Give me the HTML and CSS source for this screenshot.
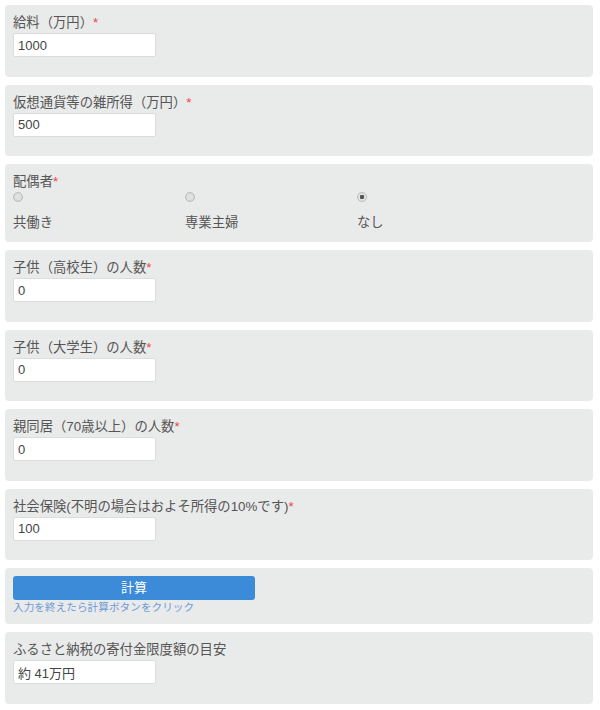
FILE: index.html
```html
<!DOCTYPE html>
<html lang="ja">
<head>
<meta charset="utf-8">
<title>ふるさと納税 計算</title>
<link rel="stylesheet" href="styles.css">
</head>
<body>
<form class="form">
  <div class="card">
    <div class="label">給料（万円）<span class="req">*</span></div>
    <input class="field" type="text" value="1000">
  </div>
  <div class="card">
    <div class="label">仮想通貨等の雑所得（万円）<span class="req">*</span></div>
    <input class="field" type="text" value="500">
  </div>
  <div class="card card-radio">
    <div class="label">配偶者<span class="req">*</span></div>
    <div class="radios">
      <label class="opt"><input class="radio" type="radio" name="sp"><span class="opt-text">共働き</span></label>
      <label class="opt"><input class="radio" type="radio" name="sp"><span class="opt-text">専業主婦</span></label>
      <label class="opt"><input class="radio" type="radio" name="sp" checked><span class="opt-text">なし</span></label>
    </div>
  </div>
  <div class="card">
    <div class="label">子供（高校生）の人数<span class="req">*</span></div>
    <input class="field" type="text" value="0">
  </div>
  <div class="card">
    <div class="label">子供（大学生）の人数<span class="req">*</span></div>
    <input class="field" type="text" value="0">
  </div>
  <div class="card">
    <div class="label">親同居（70歳以上）の人数<span class="req">*</span></div>
    <input class="field" type="text" value="0">
  </div>
  <div class="card">
    <div class="label">社会保険(不明の場合はおよそ所得の10%です)<span class="req">*</span></div>
    <input class="field" type="text" value="100">
  </div>
  <div class="card card-btn">
    <button class="btn" type="button">計算</button>
    <div class="hint">入力を終えたら計算ボタンをクリック</div>
  </div>
  <div class="card">
    <div class="label">ふるさと納税の寄付金限度額の目安</div>
    <input class="field" type="text" value="約 41万円">
  </div>
</form>
</body>
</html>
```
FILE: styles.css
```css
html, body {
  margin: 0;
  padding: 0;
  background: #ffffff;
}
body {
  font-family: "Liberation Sans", "Noto Sans CJK JP", sans-serif;
  color: #555555;
}
.form {
  width: 588px;
  margin: 5px 0 0 5px;
  display: flex;
  flex-direction: column;
  gap: 8px;
}
.card {
  background: #e9eaea;
  border-radius: 4px;
  padding: 8px 8px 19.5px 8px;
  display: flex;
  flex-direction: column;
  align-items: flex-start;
}
.label {
  font-size: 13.33px;
  line-height: 20px;
  color: #555555;
}
.req {
  color: #ee4444;
}
.field {
  box-sizing: border-box;
  width: 143px;
  height: 24px;
  margin: 0;
  padding: 0 4px;
  border: 1px solid #dcdcdc;
  border-radius: 2px;
  background: #ffffff;
  font-family: "Liberation Sans", "Noto Sans CJK JP", sans-serif;
  font-size: 13px;
  color: #444444;
  outline: none;
}
.card-radio {
  padding-bottom: 9px;
}
.radios {
  display: grid;
  grid-template-columns: 172px 172px 172px;
  margin-top: 0;
}
.opt {
  display: flex;
  flex-direction: column;
  align-items: flex-start;
}
.radio {
  appearance: none;
  -webkit-appearance: none;
  box-sizing: border-box;
  width: 10px;
  height: 10px;
  margin: 0;
  border: 1px solid #b9b9b9;
  border-radius: 50%;
  background: radial-gradient(circle, #e4e4e4 0%, #d6d6d6 100%);
}
.radio:checked {
  background: radial-gradient(circle, #555555 0 2px, #e2e2e2 2.5px);
}
.opt-text {
  margin-top: 11px;
  font-size: 13.33px;
  line-height: 20px;
  color: #555555;
}
.card-btn {
  padding-bottom: 10px;
}
.btn {
  width: 242px;
  height: 24px;
  margin: 0;
  padding: 0;
  border: none;
  border-radius: 3px;
  background: #3b8bd9;
  color: #ffffff;
  font-family: "Liberation Sans", "Noto Sans CJK JP", sans-serif;
  font-size: 13px;
  line-height: 24px;
}
.hint {
  font-size: 10.67px;
  line-height: 14px;
  color: #6f9ad6;
}
```
